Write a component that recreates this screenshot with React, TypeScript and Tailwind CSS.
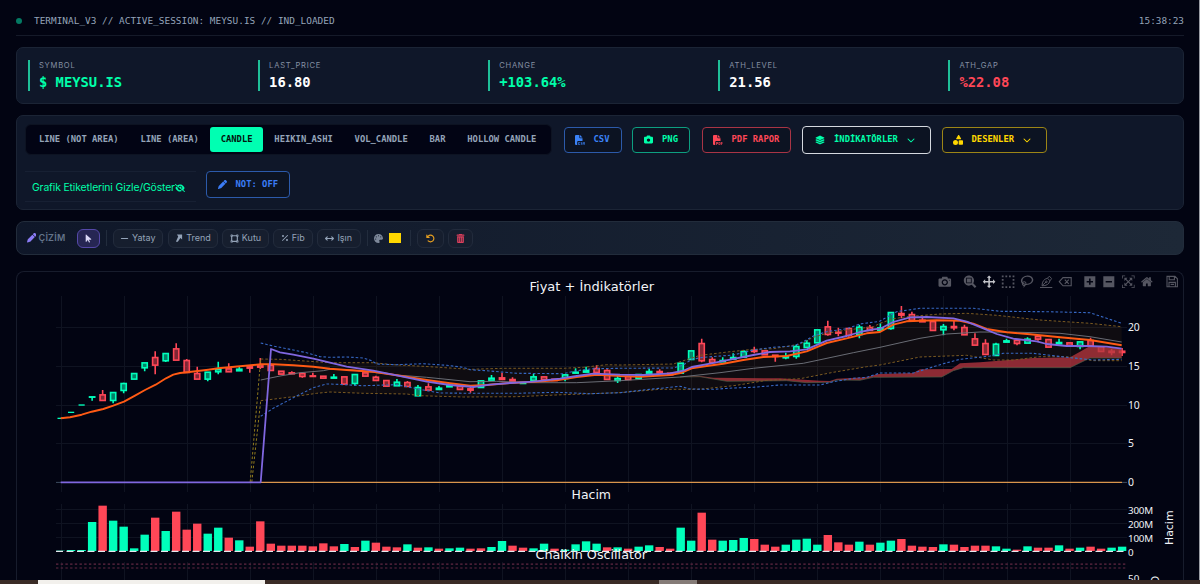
import type { ReactNode } from 'react'
import clsx from 'clsx'
import {
  FaArrowPointer, FaArrowRotateLeft, FaArrowsLeftRight, FaCamera, FaChevronDown, FaEyeSlash, FaFileCsv, FaFilePdf,
  FaLayerGroup, FaMinus, FaPalette, FaPen, FaPercent, FaShapes, FaTrashCan, FaVectorSquare,
} from 'react-icons/fa6'

const UP = '#00ffbb'
const DOWN = '#ff4757'

const stats = [
  { label: 'SYMBOL', value: '$ MEYSU.IS', cls: 'text-[#00ffaa]' },
  { label: 'LAST_PRICE', value: '16.80', cls: 'text-white' },
  { label: 'CHANGE', value: '+103.64%', cls: 'text-[#00ffaa]' },
  { label: 'ATH_LEVEL', value: '21.56', cls: 'text-white' },
  { label: 'ATH_GAP', value: '%22.08', cls: 'text-[#ff4757]' },
]

const chartTypes = ['LINE (NOT AREA)', 'LINE (AREA)', 'CANDLE', 'HEIKIN_ASHI', 'VOL_CANDLE', 'BAR', 'HOLLOW CANDLE']

// [direction, body top, body bottom, high, low] — vertical values are 3 units per px, from y = 270
type Candle = [string, number, number, number?, number?]
const candles: Candle[] = [
  ['g', 444, 445], ['g', 426, 427], ['g', 404, 406], ['g', 380, 382, 380, 392], ['r', 374, 392, 360], ['g', 367, 392, 367, 400],
  ['g', 340, 362, 338, 370], ['g', 310, 328], ['g', 278, 294, 278, 304], ['r', 262, 286, 244, 313], ['g', 250, 273, 250, 276], ['r', 236, 271, 220],
  ['r', 271, 308, 267], ['r', 310, 328, 290], ['g', 306, 328, 306, 334], ['g', 298, 306, 275, 313], ['r', 296, 306, 280], ['g', 297, 303, 290],
  ['r', 290, 295, 288, 308], ['r', 287, 292, 264, 297], ['r', 285, 302, 280], ['r', 303, 313], ['r', 308, 312, 304], ['r', 310, 320, 310, 323],
  ['r', 317, 320, 308], ['r', 318, 325], ['g', 321, 325, 312], ['r', 320, 343], ['g', 313, 341, 313, 347], ['r', 308, 319],
  ['r', 321, 332, 317], ['r', 331, 349], ['g', 336, 348, 327], ['r', 337, 350, 333], ['g', 352, 378, 345], ['r', 350, 361, 340],
  ['g', 354, 359, 348], ['g', 345, 351, 340], ['r', 348, 359], ['r', 356, 361, 350, 368], ['g', 332, 353], ['g', 324, 331, 315],
  ['r', 323, 329, 308], ['r', 328, 334, 322], ['g', 337, 341], ['g', 320, 332, 312], ['r', 320, 330], ['r', 327, 332],
  ['g', 314, 326, 312, 334], ['g', 306, 310, 295], ['g', 301, 307, 290], ['r', 295, 308, 285], ['r', 301, 329, 298], ['g', 325, 332, 318, 339],
  ['r', 319, 329], ['g', 313, 326], ['g', 304, 310, 297], ['r', 304, 309, 298], ['r', 309, 315], ['g', 279, 310],
  ['g', 242, 269], ['r', 220, 273, 206, 277], ['r', 268, 278, 262], ['g', 271, 276, 262], ['g', 262, 268, 250], ['g', 244, 262, 240],
  ['r', 240, 245, 230, 250], ['r', 242, 255], ['r', 255, 260, 255, 275], ['g', 259, 264, 248, 268], ['g', 229, 260, 224, 266], ['g', 219, 233, 210],
  ['g', 179, 219], ['r', 170, 194, 152, 197], ['r', 186, 190, 173, 199], ['r', 175, 197, 175, 200], ['g', 171, 194, 164, 205], ['r', 172, 182, 165],
  ['g', 173, 181, 160], ['g', 127, 176, 127, 179], ['r', 130, 136, 108, 145], ['r', 133, 152, 125], ['r', 150, 156, 142], ['r', 154, 182],
  ['g', 169, 180, 162, 196], ['r', 169, 174, 150, 181], ['r', 172, 195, 164], ['r', 206, 226, 190], ['r', 220, 254, 208], ['g', 222, 257, 218],
  ['g', 212, 217, 206], ['r', 210, 221, 210, 226], ['g', 207, 220, 202], ['r', 198, 208, 198, 212], ['r', 208, 232], ['g', 217, 222, 206],
  ['r', 218, 227], ['g', 215, 230, 215, 238], ['r', 211, 228, 203], ['r', 230, 245], ['r', 243, 248, 237, 256], ['r', 243, 248, 234, 258],
]

// bar heights, a third of a px each
const volumes =
  'g1 g3 g3 g87 r136 g91 g73 g8 g49 r100 g60 r118 r64 r82 g52 g70 r40 g32 r13 r89 r22 r16 r16 r16 r14 r23 r14 g21 r12 g31 r25 r13 r11 g20 r10 g11 r7 g8 g10 r7 r8 g12 g30 r16 r10 g8 g22 r7 g4 g20 g29 g22 r11 g11 r7 g13 g17 r12 r7 g70 g31 r115 r34 g31 g33 g39 r36 r19 r13 g19 g34 g37 g19 r48 r26 r19 g28 r19 g25 g31 r36 r16 r13 r12 g20 r19 r12 r16 r16 g14 g7 r4 g14 r10 r10 g17 r7 g10 r13 r7 g10 g13'
    .split(' ')
    .map(v => ({ dir: v[0], h: Number(v.slice(1)) / 3 }))

const cx = (i: number) => 60.6 + i * 10.51

// A trace comes in slices: the slice's left edge in px, then x,y pairs at 3 units per px.
type Slice = [number, string]
const points = (slices: Slice[]) =>
  slices.flatMap(([ox, s]) =>
    s.split(' ').map(p => {
      const [x, y] = p.split(',').map(Number)
      return [ox + x / 3, 270 + y / 3]
    }),
  )
const toStr = (pts: number[][]) => pts.map(p => `${p[0].toFixed(1)},${p[1].toFixed(1)}`).join(' ')

const orange = points([
  [40, '62,445 90,442 125,434 155,425 190,417 220,407 252,395 285,377 315,360 347,344 378,325 400,314 420,309 441,307 473,303 505,299 535,295 600,289 662,283 700,283 760,286 820,290'],
  [330, '0,296 60,301 130,305 200,316 290,330 360,340 420,347 470,345 540,339 600,336 680,331 740,321 800,314 860,317'],
  [620, '0,318 60,320 150,315 185,308 215,295 260,288 310,281 370,270 430,261 500,258 560,244 620,219 680,205 740,190'],
  [880, '0,186 40,164 80,154 120,152 170,151 240,152 280,161 320,177 380,187 450,193 540,202 630,210 725,226'],
])
const purple = points([
  [40, '62,637 662,637 693,237 720,247 760,254 820,266'],
  [330, '0,278 50,290 130,302 200,316 290,335 360,345 430,351 480,344 540,339 610,335 690,326 740,318 790,311 850,313'],
  [620, '0,314 70,315 150,310 190,302 215,291 270,281 330,269 400,255 450,246 510,244 560,238 620,212 680,198 720,186 760,178'],
  [880, '0,176 40,156 90,142 140,141 220,145 260,155 310,175 350,192 400,206 470,214 500,222 560,228 620,228 680,230 725,236'],
])
const bandUp = points([
  [40, '662,219 700,228 760,240 800,248 840,260'],
  [330, '0,262 50,261 100,264 125,272 140,282 200,284 280,281 350,286 400,292 420,299 480,303 560,310 700,311 740,302 790,296'],
  [620, '0,295 160,294 190,285 215,268 250,262 340,255 400,240 460,232 520,228 550,215 580,198 620,185 680,176 720,162 770,155'],
  [880, '0,153 50,125 120,115 280,115 360,124 500,125 630,128 680,145 725,160'],
])
const bandLow = points([
  [40, '662,439 700,415 760,383 820,353 860,342'],
  [330, '0,342 100,347 200,344 280,360 330,369 440,370 560,370 680,367 780,371'],
  [620, '0,368 90,358 180,349 210,357 280,358 340,354 400,352 480,345 600,345 640,335 700,325 740,322'],
  [880, '0,309 100,309 190,281 240,268 330,258 370,250 460,250 560,262 640,270 725,268'],
])
const envUp = points([
  [40, '662,267 720,268'],
  [330, '0,278 130,278 190,284 300,290 420,298 520,295 700,295 760,292 830,284'],
  [620, '0,285 160,282 240,256 330,245 400,238 460,236 540,222 580,202 620,190 680,180 760,170'],
  [880, '0,160 40,146 80,140 180,132 260,130 350,136 480,150 630,160 725,170'],
])
const envLow = points([
  [40, '662,392 760,380 830,370'],
  [330, '0,366 100,370 230,372 270,377 400,381 560,380 700,374'],
  [620, '0,368 120,358 240,358 350,346 440,331 540,326 640,307 740,290'],
  [880, '0,285 120,261 260,256 340,270 400,270 480,260 560,260 640,272 725,272'],
])
const mid = points([
  [40, '662,330 720,318 780,308 850,302'],
  [330, '0,298 60,299 200,315 290,322 420,335 500,334 600,338 740,338'],
  [620, '0,332 180,321 300,308 400,295 550,280 700,248'],
  [880, '0,232 120,205 200,192 300,186 420,187 540,190 630,200 725,216'],
])
const cloudTop = points([
  [620, '180,320 240,318 280,323 480,325 600,332 630,333 650,326 740,322 770,313'],
  [880, '0,312 100,309 120,298 215,297 240,280 300,277 460,264 570,262 600,245 630,228 725,236'],
])
const cloudLow = points([
  [620, '180,321 240,320 320,334 500,332 560,338 630,337 650,330 720,331 760,322'],
  [880, '0,322 185,321 220,302 250,293 570,293 630,264 725,264'],
])

const gridX = Array.from({ length: 17 }, (_, i) => Math.round(60.6 + i * 63.06) + 0.5)
const priceTicks = [
  { y: 327.5, t: '20' },
  { y: 366.5, t: '15' },
  { y: 405.5, t: '10' },
  { y: 443.5, t: '5' },
  { y: 482.5, t: '0' },
]
const volTicks = [
  { y: 510, t: '300M' },
  { y: 524, t: '200M' },
  { y: 538, t: '100M' },
  { y: 552, t: '0' },
]

const box = 'rounded-[7px] border border-[#1b2435] bg-[#0f1729]'
const mono = "font-['DejaVu_Sans_Mono',monospace]"

function Header() {
  return (
    <header className="mx-4 flex h-9 items-center justify-between border-b border-[#151a29] pt-[7px]">
      <div className="flex items-center gap-3">
        <span className="size-1.5 rounded-full bg-[#047a63]" />
        <span className={clsx(mono, 'text-[9.43px] text-[#94a3b8]')}>TERMINAL_V3 // ACTIVE_SESSION: MEYSU.IS // IND_LOADED</span>
      </div>
      <span className={clsx(mono, 'text-[9.4px] text-[#94a3b8]')}>15:38:23</span>
    </header>
  )
}

function Stats() {
  return (
    <section className={clsx(box, 'mx-4 mt-[11px] flex h-[57px] items-center pl-[11px]')}>
      {stats.map(s => (
        <div key={s.label} className="flex h-[31px] w-[230.1px] shrink-0 flex-col justify-between border-l-2 border-[#1fbf98] pt-px pl-[9px]">
          <span className="h-[9px] text-[7.6px] leading-[9px] tracking-[0.75px] text-[#8590a3]">{s.label}</span>
          <span className={clsx(mono, 'text-[13.8px] leading-[17px] font-bold', s.cls)}>{s.value}</span>
        </div>
      ))}
    </section>
  )
}

function ActionButton({ icon, label, cls, chevron }: { icon: ReactNode; label: string; cls: string; chevron?: boolean }) {
  return (
    <button className={clsx('flex shrink-0 items-center rounded border bg-[#0c1322] text-[8.85px] font-bold', mono, cls)}>
      {icon}
      <span className="pt-px whitespace-pre">{label}</span>
      {chevron && <FaChevronDown className="ml-[9px] text-[8px]" />}
    </button>
  )
}

function Controls() {
  return (
    <section className={clsx(box, 'mx-4 mt-[11px] h-[95px] pt-2 pl-[7.5px]')}>
      <div className="flex h-[31px] items-center">
        <div className="flex h-[31px] w-[527px] items-center rounded-md border border-[#0d1322] bg-[#020414] px-[2.5px]">
          {chartTypes.map(t => (
            <button
              key={t}
              className={clsx(
                mono,
                'h-[25px] rounded-[3px] px-[10.9px] pt-px text-[8.84px] font-bold whitespace-nowrap',
                t === 'CANDLE' ? 'bg-[#00ffb2] text-[#02130e]' : 'text-[#94a3b8]',
              )}
            >
              {t}
            </button>
          ))}
        </div>
        <ActionButton icon={<FaFileCsv className="mr-[9px] text-[10px]" />} label="CSV" cls="ml-3 h-[26px] w-[58px] border-[#2c5aaa] pl-[10px] text-[#3b82f6]" />
        <ActionButton icon={<FaCamera className="mr-[9px] text-[9px]" />} label="PNG" cls="ml-[10.5px] h-[26px] w-[58px] border-[#0d9f80] pl-[11px] text-[#00ffaa]" />
        <ActionButton icon={<FaFilePdf className="mr-[9px] text-[10px]" />} label="PDF RAPOR" cls="ml-[11.5px] h-[26px] w-[89px] border-[#a93445] pl-[10px] text-[#ff4757]" />
        <ActionButton
          icon={<FaLayerGroup className="mr-[9.5px] text-[10px]" />}
          label="İNDİKATÖRLER"
          chevron
          cls="ml-[11.5px] h-7 w-[129px] border-[#d5d9e0] pl-[11.5px] text-[#00ffaa]"
        />
        <ActionButton icon={<FaShapes className="mr-[8.5px] text-[10px]" />} label="DESENLER" chevron cls="ml-[10.5px] h-[26px] w-[105px] border-[#9c8516] pl-[10.5px] text-[#ffd700]" />
      </div>
      <div className="mt-4 flex items-start">
        <div className="flex h-[31px] w-[171px] items-center border-y border-[#172033] pt-0.5 pl-[7.5px] text-[10.4px] text-[#00ffaa]">
          <span className="tracking-[-0.14px] whitespace-nowrap">Grafik Etiketlerini Gizle/Göster</span>
          <FaEyeSlash className="shrink-0 text-[10px]" />
        </div>
        <ActionButton icon={<FaPen className="mr-[9px] text-[9px]" />} label="NOT: OFF" cls="ml-[10.5px] h-[27px] w-[84px] border-[#2c5aaa] pl-[10.5px] text-[#3b7cf6]" />
      </div>
    </section>
  )
}

function Tool({ icon, label, cls }: { icon: ReactNode; label?: string; cls: string }) {
  return (
    <button className={clsx('flex h-[19px] shrink-0 items-center justify-center gap-[3px] rounded-md border text-[9px]', cls)}>
      {icon}
      {label && <span>{label}</span>}
    </button>
  )
}

const Divider = ({ cls }: { cls: string }) => <div className={clsx('h-4 w-px bg-[#222c3d]', cls)} />

function DrawBar() {
  const plain = 'border-[#222b3c] bg-[#161e2e] text-[#94a3b8]'
  return (
    <section className="mx-4 mt-[11px] flex h-[34px] items-center rounded-lg border border-[#222c3b] bg-linear-to-r from-[#0f1729] to-[#1d2837] pl-[9.5px]">
      <FaPen className="text-[9.5px] text-[#8b7cf6]" />
      <span className="ml-[2.5px] w-[38.5px] text-[9px] font-semibold tracking-[0.25px] text-[#64748b]">ÇİZİM</span>
      <Tool icon={<FaArrowPointer className="text-[9px]" />} cls="w-[23px] border-[#5548a8] bg-[#262653] text-[#dbd9f6]" />
      <Divider cls="ml-[6px]" />
      <Tool icon={<FaMinus />} label="Yatay" cls={clsx('ml-[5.5px] w-[50.5px]', plain)} />
      <Tool
        icon={
          <svg viewBox="0 0 9 9" className="size-[8px]" fill="currentColor">
            <path d="M2.2 0.6H8V6.2L6 4.6 3.2 8.6H1L3.6 2.8Z" />
          </svg>
        }
        label="Trend"
        cls={clsx('ml-[5px] w-[50px]', plain)}
      />
      <Tool icon={<FaVectorSquare />} label="Kutu" cls={clsx('ml-[4px] w-[47px]', plain)} />
      <Tool icon={<FaPercent className="text-[8px]" />} label="Fib" cls={clsx('ml-[4px] w-[39.5px]', plain)} />
      <Tool icon={<FaArrowsLeftRight />} label="Işın" cls={clsx('ml-[4.5px] w-[43.5px]', plain)} />
      <Divider cls="ml-[6px]" />
      <FaPalette className="ml-[6px] text-[9px] text-[#7c8799]" />
      <div className="ml-[6px] h-[10px] w-[12.5px] bg-[#ffd700]" />
      <Divider cls="ml-[9px]" />
      <Tool icon={<FaArrowRotateLeft />} cls="ml-[6px] w-[26.5px] border-[#222b3c] bg-[#161e2e] text-[#e8a020]" />
      <Tool icon={<FaTrashCan />} cls="ml-[4.5px] w-[25px] border-[#222b3c] bg-[#161e2e] text-[#d93f5c]" />
    </section>
  )
}

// Toolbar glyphs; y grows upwards in these, hence the flip.
const modeIcons: { x: number; w: number; d: string; on?: boolean }[] = [
  { x: 938.5, w: 1000, d: 'm500 450c-83 0-150-67-150-150 0-83 67-150 150-150 83 0 150 67 150 150 0 83-67 150-150 150z m400 150h-120c-16 0-34 13-39 29l-31 93c-6 15-23 28-40 28h-340c-16 0-34-13-39-28l-31-94c-6-15-23-28-40-28h-120c-55 0-100-45-100-100v-450c0-55 45-100 100-100h800c55 0 100 45 100 100v450c0 55-45 100-100 100z m-400-550c-138 0-250 112-250 250 0 138 112 250 250 250 138 0 250-112 250-250 0-138-112-250-250-250z m365 380c-19 0-35 16-35 35 0 19 16 35 35 35 19 0 35-16 35-35 0-19-16-35-35-35z' },
  { x: 963.8, w: 1000, d: 'm1000-25l-250 251c40 63 63 138 63 218 0 224-182 406-407 406-224 0-406-182-406-406s183-406 407-406c80 0 155 22 218 62l250-250 125 125z m-812 250l0 438 437 0 0-438-437 0z m62 375l313 0 0-312-313 0 0 312z' },
  { x: 982.8, w: 1000, on: true, d: 'm1000 350l-187 188 0-125-250 0 0 250 125 0-188 187-187-187 125 0 0-250-250 0 0 125-188-188 186-187 0 125 252 0 0-250-125 0 187-188 188 188-125 0 0 250 250 0 0-126 187 188z' },
  { x: 1001.8, w: 1000, d: [0, 286, 571, 857].map(a => `M${a} 850v-143h143v143z M${a} -7v-143h143v143z`).join(' ') + [564, 279].map(b => `M0 ${b}v-143h143v143z M857 ${b}v-143h143v143z`).join(' ') },
  { x: 1020.8, w: 1031, d: 'm1018 538c-36 207-290 336-568 286-277-48-473-256-436-463 10-57 36-108 76-151-13-66 11-137 68-183 34-28 75-41 114-42l-55-70 0 0c-2-1-3-2-4-3-10-14-8-34 5-45 14-11 34-8 45 4 1 1 2 3 2 5l0 0 113 140c16 11 31 24 45 40 4 3 6 7 8 11 48-3 100 0 151 9 278 48 473 255 436 462z m-624-379c-80 14-149 48-197 96 42 42 109 47 156 9 33-26 47-66 41-105z m-187-74c-19 16-33 37-39 60 50-32 109-55 174-68-42-25-95-24-135 8z m360 75c-34-7-69-9-102-8 8 62-16 128-68 170-73 59-175 54-244-5-9 20-16 40-20 61-28 159 121 317 333 354s407-60 434-217c28-159-121-318-333-355z' },
  { x: 1084.3, w: 875, d: 'm1 787l0-875 875 0 0 875-875 0z m687-500l-187 0 0-187-125 0 0 187-188 0 0 125 188 0 0 187 125 0 0-187 187 0 0-125z' },
  { x: 1103.3, w: 875, d: 'm0 788l0-876 875 0 0 876-875 0z m688-500l-500 0 0 125 500 0 0-125z' },
  { x: 1122, w: 1000, d: 'm250 850l-187 0-63 0 0-62 0-188 63 0 0 188 187 0 0 62z m688 0l-188 0 0-62 188 0 0-188 62 0 0 188 0 62-62 0z m-875-938l0 188-63 0 0-188 0-62 63 0 187 0 0 62-187 0z m875 188l0-188-188 0 0-62 188 0 62 0 0 62 0 188-62 0z m-125 188l-1 0-93-94-156 156 156 156 92-93 2 0 0 250-250 0 0-2 93-92-156-156-156 156 94 92 0 2-250 0 0-250 0 0 93 93 157-156-157-156-93 94 0 0 0-250 250 0 0 0-94 93 156 157 156-157-93-93 0 0 250 0 0 250z' },
  { x: 1141, w: 928, d: 'm786 296v-267q0-15-11-26t-25-10h-214v214h-143v-214h-214q-15 0-25 10t-11 26v267q0 1 0 2t0 2l321 264 321-264q1-1 1-4z m124 39l-34-41q-5-5-12-6h-2q-7 0-12 3l-386 322-386-322q-7-4-13-4-7 2-12 7l-35 41q-4 5-3 13t6 12l401 334q18 15 42 15t43-15l136-114v109q0 8 5 13t13 5h107q8 0 13-5t5-13v-227l122-102q5-5 6-12t-4-13z' },
]

function ModeBar() {
  return (
    <g fill="#555661">
      {modeIcons.map(m => {
        const k = 12.6 / Math.max(m.w, 1000)
        return <path key={m.x} d={m.d} fill={m.on ? '#c3c4c9' : undefined} transform={`translate(${m.x} 275.4) scale(${k} ${-k}) translate(0 -850)`} />
      })}
      {/* draw open path */}
      <g fill="none" stroke="#555661" strokeWidth="1">
        <path d="M1040 287.5H1052.3" />
        <path d="M1042 285.8C1042.2 281.4 1043.8 279.2 1047.5 278.2L1050 280.8C1049 284.4 1046.4 285.8 1042 285.8ZM1042 285.8L1046 282M1047.5 278.2L1049.4 276.2 1051.6 278.6 1050 280.8" />
        <circle cx="1046.4" cy="281.8" r="0.8" />
      </g>
      {/* erase shape */}
      <path d="M1059.3 281.7L1063 277.6H1071.2V285.8H1063ZM1064.8 279.6L1068.8 283.8M1068.8 279.6L1064.8 283.8" fill="none" stroke="#555661" strokeWidth="1.1" />
      {/* save */}
      <path d="M1167 276.4H1175L1177.4 278.8V286.8H1167ZM1169.2 276.4V279.8H1174.4V276.4M1169 286.8V282.4H1175.4V286.8M1170.6 284.4H1174" fill="none" stroke="#555661" strokeWidth="1.1" />
    </g>
  )
}

function Candles() {
  return (
    <g strokeWidth="1.6">
      {candles.map(([dir, top, bot, hi = top, lo = bot], i) => {
        const color = dir === 'g' ? UP : DOWN
        const y = (v: number) => 270 + v / 3
        return (
          <g key={i} stroke={color} strokeWidth={i < 3 ? 1 : undefined}>
            <path d={`M${cx(i)} ${y(hi)}V${y(top)}M${cx(i)} ${y(bot)}V${y(lo)}`} />
            <rect x={cx(i) - 2.6} y={y(top) + 0.2} width="5.2" height={Math.max((bot - top) / 3 - 0.4, 0.3)} fill={color} fillOpacity="0.5" />
          </g>
        )
      })}
    </g>
  )
}

// The svg covers the panel and uses page coordinates.
function Chart() {
  return (
    <section className="mx-4 mt-4 h-[309px] overflow-hidden rounded-t-lg border border-b-0 border-[#171c2c] bg-[#020412]">
      <svg width="1166" height="308" viewBox="17 272 1166 308" className="block">
        <g stroke="#0f1321">
          {gridX.map(x => (
            <path key={x} d={`M${x} 296V492M${x} 504V551M${x} 562V580`} />
          ))}
          {priceTicks.map(t => (
            <path key={t.y} d={`M56 ${t.y}H1127`} />
          ))}
          {volTicks.slice(0, 3).map(t => (
            <path key={t.y} d={`M56 ${t.y - 0.5}H1127`} />
          ))}
        </g>

        <polygon points={toStr([...envUp, ...[...envLow].reverse()])} fill="#ffa500" fillOpacity="0.055" />
        <Candles />
        <polygon points={toStr([...cloudTop, ...[...cloudLow].reverse()])} fill="#b3363d" fillOpacity="0.78" />
        <polyline points={toStr(cloudLow)} fill="none" stroke="#4b5b45" strokeWidth="0.7" />

        <g fill="none">
          <polyline points={toStr(mid)} stroke="#747780" strokeWidth="0.9" />
          <g stroke="#7a5a22" strokeWidth="1" strokeDasharray="2.6 2">
            <polyline points={toStr(envUp)} />
            <polyline points={toStr(envLow)} />
            <path d="M250.2 482L260.7 359M251.8 482L260.7 401" stroke="#8f7a1e" />
          </g>
          <g stroke="#3768c4" strokeWidth="1.1" strokeDasharray="2.6 2">
            <polyline points={toStr(bandUp)} />
            <polyline points={toStr(bandLow)} />
          </g>
          <path d="M1122 482.4H1127" stroke="#3c4a5e" />
          <path d="M56 482.4H61" stroke="#3c4a5e" />
          <path d="M260.7 482.4H1122" stroke="#d9954c" strokeWidth="1.4" />
          <polyline points={toStr(orange)} stroke="#ff5a14" strokeWidth="1.9" strokeLinejoin="round" />
          <polyline points={toStr(purple)} stroke="#8067e0" strokeWidth="1.8" strokeLinejoin="round" />
        </g>

        {volumes.map((v, i) => (
          <rect key={i} x={cx(i) - 4.2} y={551 - v.h} width="8.4" height={v.h} fill={v.dir === 'g' ? UP : DOWN} />
        ))}
        <path d="M56 551.4H1127" stroke="#e6e8ee" strokeWidth="1.4" strokeDasharray="7 3.5" />
        <path d="M56 564.2H1127M56 568H1127" stroke="#622843" strokeWidth="1.2" strokeDasharray="2.4 2.3" />

        <g fill="#f1f3f7" className="font-['Noto_Sans','Open_Sans',sans-serif]" fontSize="10.4">
          {priceTicks.map(t => (
            <text key={t.y} x="1128" y={t.y + 3.6} textLength={t.t.length * 5.8}>{t.t}</text>
          ))}
          {volTicks.map(t => (
            <text key={t.y} x="1128" y={t.y + 3.5} fontSize="9.8" textLength={t.t === '0' ? 5.6 : 25.2}>{t.t}</text>
          ))}
          <text x="1128" y="582" fontSize="9.8" textLength="11.4">50</text>
        </g>
        <g fill="#f1f3f7" className="font-['DejaVu_Sans',sans-serif]" fontSize="12">
          <text x="529.5" y="291.4" textLength="124.5" lengthAdjust="spacingAndGlyphs">Fiyat + İndikatörler</text>
          <text x="571.5" y="499.4" textLength="39.5" lengthAdjust="spacingAndGlyphs">Hacim</text>
          <text x="535.5" y="559" textLength="111.5" lengthAdjust="spacingAndGlyphs">Chaikin Oscillator</text>
          <text transform="translate(1173 545) rotate(-90)" fontSize="10.5" textLength="34.5" lengthAdjust="spacingAndGlyphs">Hacim</text>
          <text transform="translate(1159 584.4) rotate(-90)" fontSize="11">O</text>
        </g>
        <ModeBar />
      </svg>
    </section>
  )
}

export default function App() {
  return (
    <div className="flex h-[584px] w-[1200px] flex-col overflow-hidden bg-[#020412] font-['Inter',sans-serif]">
      <div className="flex h-[580px]">
        <div className="w-[1200px] shrink-0 overflow-hidden">
          <Header />
          <Stats />
          <Controls />
          <DrawBar />
          <Chart />
        </div>
        <div className="-ml-px w-px bg-[#9a9ca4]" />
      </div>
      <div className="flex h-1 bg-[#3a2b26]">
        <div className="ml-[38px] w-[227px] bg-[#f2f0ec]" />
        <div className="ml-[394px] w-[38px] bg-[#857b77]" />
      </div>
    </div>
  )
}
